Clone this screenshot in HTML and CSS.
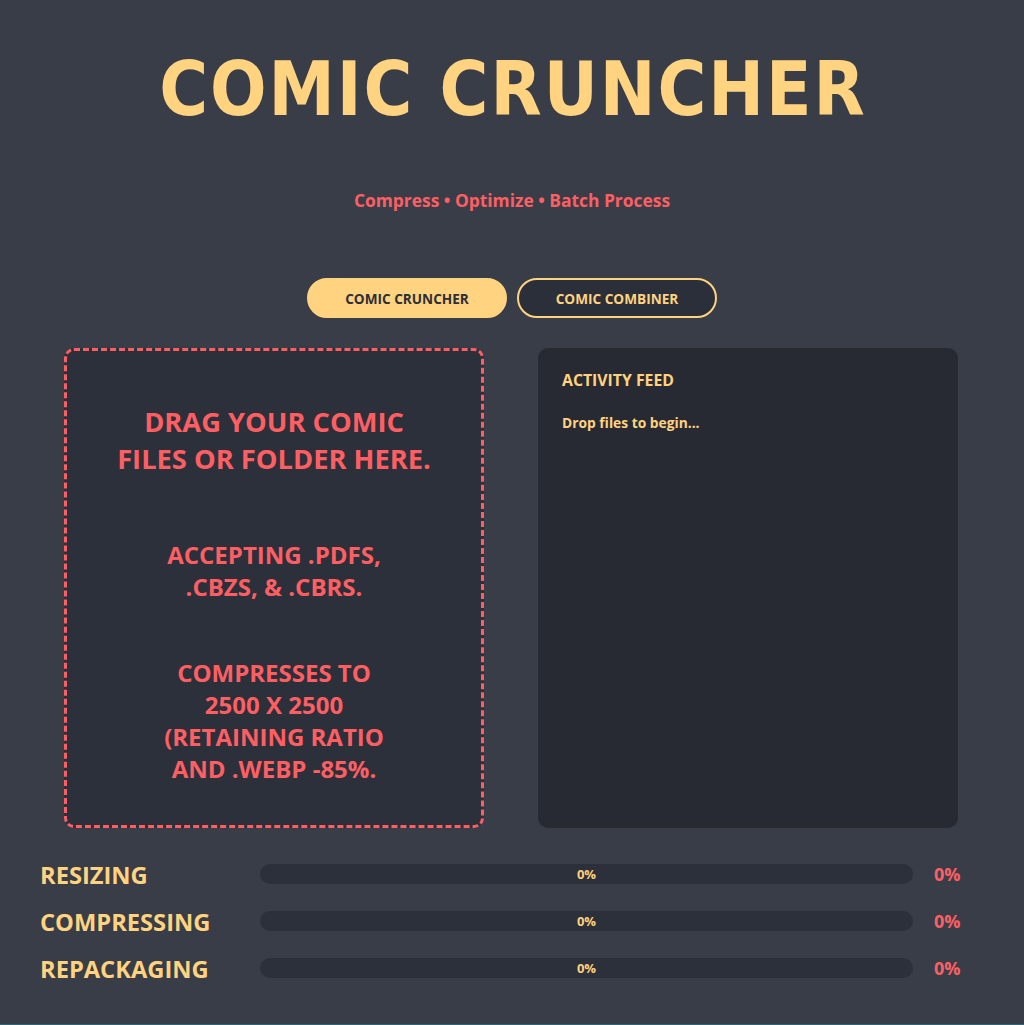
FILE: index.html
```html
<!DOCTYPE html>
<html lang="en">
<head>
<meta charset="utf-8">
<title>Comic Cruncher</title>
<link rel="stylesheet" href="styles.css">
</head>
<body>
<div class="page">
  <header class="header">
    <h1 class="title">COMIC CRUNCHER</h1>
    <p class="subtitle">Compress • Optimize • Batch Process</p>
  </header>

  <nav class="tabs">
    <button class="tab tab-active">COMIC CRUNCHER</button>
    <button class="tab">COMIC COMBINER</button>
  </nav>

  <main class="panels">
    <section class="dropzone">
      <p class="drop-main">DRAG YOUR COMIC<br>FILES OR FOLDER HERE.</p>
      <p class="drop-info drop-accept">ACCEPTING .PDFS,<br>.CBZS, &amp; .CBRS.</p>
      <p class="drop-info drop-spec">COMPRESSES TO<br>2500 X 2500<br>(RETAINING RATIO<br>AND .WEBP -85%.</p>
    </section>
    <section class="feed">
      <h2 class="feed-title">ACTIVITY FEED</h2>
      <p class="feed-msg">Drop files to begin...</p>
    </section>
  </main>

  <section class="progress">
    <div class="row">
      <span class="label">RESIZING</span>
      <div class="bar"><span class="bar-text">0%</span></div>
      <span class="pct">0%</span>
    </div>
    <div class="row">
      <span class="label">COMPRESSING</span>
      <div class="bar"><span class="bar-text">0%</span></div>
      <span class="pct">0%</span>
    </div>
    <div class="row">
      <span class="label">REPACKAGING</span>
      <div class="bar"><span class="bar-text">0%</span></div>
      <span class="pct">0%</span>
    </div>
  </section>
</div>
</body>
</html>
```

FILE: styles.css
```css
* { box-sizing: border-box; }

html {
  background: #2e6577;
  height: 100%;
}

body {
  margin: 0;
  height: 1024px;
  background: #383d48;
  font-family: "Open Sans", "Noto Sans", sans-serif;
  color: #ffd37f;
}

.page {
  display: flex;
  flex-direction: column;
  align-items: center;
}

.header {
  display: flex;
  flex-direction: column;
  align-items: center;
}

.title {
  margin: 44px 0 0;
  font-family: "DejaVu Sans Condensed", "DejaVu Sans", sans-serif;
  font-weight: bold;
  font-size: 74px;
  line-height: 90px;
  color: #ffd37f;
  letter-spacing: 2px;
  padding-left: 2px;
}

.subtitle {
  margin: 54px 0 0;
  font-size: 17.4px;
  font-weight: 700;
  line-height: 24px;
  color: #ff5f63;
}

.tabs {
  display: flex;
  gap: 10px;
  margin-top: 66px;
}

.tab {
  width: 200px;
  height: 40px;
  border-radius: 20px;
  border: 2px solid #ffd37f;
  background: #2b2f3a;
  color: #ffd37f;
  font-family: inherit;
  font-weight: 700;
  font-size: 13.6px;
  cursor: pointer;
}

.tab-active {
  background: #ffd37f;
  color: #2b2f3a;
}

.panels {
  display: grid;
  grid-template-columns: 420px 420px;
  gap: 54px;
  margin-top: 30px;
  margin-left: -2px;
}

.dropzone {
  height: 480px;
  border: 3px dashed #ff5f63;
  border-radius: 10px;
  background: #2b303b;
  display: flex;
  flex-direction: column;
  align-items: center;
  text-align: center;
  color: #ff5f63;
  font-weight: 700;
  padding-top: 52px;
}

.drop-main {
  margin: 0;
  font-size: 27.3px;
  line-height: 37px;
}

.drop-info {
  font-size: 24px;
  line-height: 32px;
}

.drop-accept {
  margin: 62px 0 0;
}

.drop-spec {
  margin: 54px 0 0;
}

.feed {
  height: 480px;
  border-radius: 10px;
  background: #282a33;
  padding: 21px 24px;
}

.feed-title {
  margin: 0;
  font-size: 15.8px;
  line-height: 22px;
  font-weight: 700;
}

.feed-msg {
  margin: 22px 0 0;
  font-size: 13.8px;
  font-weight: 700;
  line-height: 19px;
}

.progress {
  align-self: stretch;
  padding: 36px 40px 0;
  display: flex;
  flex-direction: column;
  gap: 27px;
}

.row {
  display: flex;
  align-items: center;
  height: 20px;
}

.label {
  width: 220px;
  font-size: 23.7px;
  font-weight: 700;
  white-space: nowrap;
  padding-top: 2px;
}

.bar {
  flex: 1;
  height: 20px;
  border-radius: 10px;
  background: #2b303a;
  display: flex;
  align-items: center;
  justify-content: center;
}

.bar-text {
  font-size: 13px;
  font-weight: 700;
}

.pct {
  width: 50px;
  margin-left: 21px;
  font-size: 18px;
  font-weight: 700;
  color: #ff5f63;
}
```
